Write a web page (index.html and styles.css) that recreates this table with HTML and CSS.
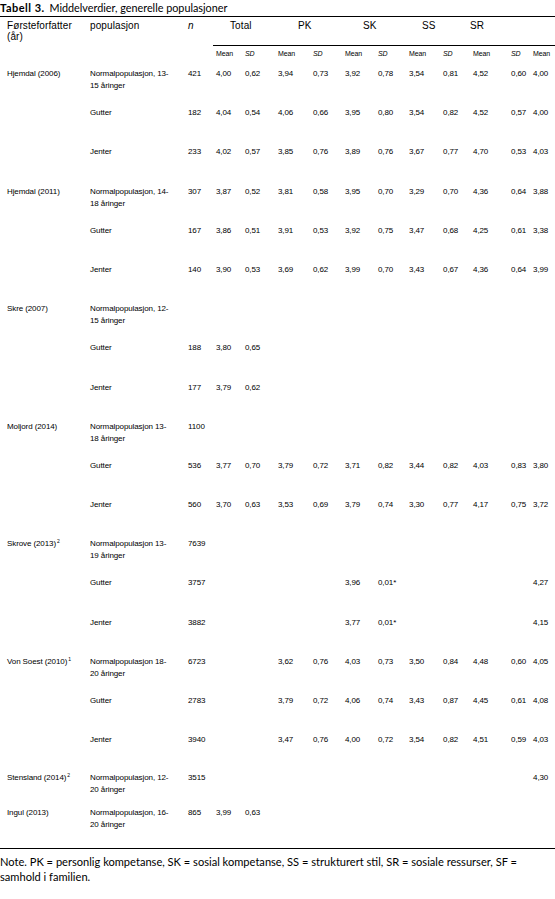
FILE: index.html
```html
<!DOCTYPE html>
<html lang="no">
<head>
<meta charset="utf-8">
<title>Tabell 3</title>
<link rel="stylesheet" href="styles.css">
</head>
<body>
<p class="title"><b>Tabell 3.</b> Middelverdier, generelle populasjoner</p>
<table class="tbl">
  <colgroup>
    <col class="c-author"><col class="c-pop"><col class="c-n">
    <col class="c-tm"><col class="c-tsd">
    <col class="c-pm"><col class="c-psd">
    <col class="c-km"><col class="c-ksd">
    <col class="c-sm"><col class="c-ssd">
    <col class="c-rm"><col class="c-rsd">
    <col class="c-fm">
  </colgroup>
  <thead>
    <tr class="head">
      <th class="first">Førsteforfatter<br>(år)</th>
      <th>populasjon</th>
      <th><i>n</i></th>
      <th colspan="2" class="grp g-total">Total</th>
      <th colspan="2" class="grp g-pk">PK</th>
      <th colspan="2" class="grp g-sk">SK</th>
      <th colspan="2" class="grp g-ss">SS</th>
      <th colspan="2" class="grp g-sr">SR</th>
      <th class="grp"></th>
    </tr>
    <tr class="sub">
      <th class="first"></th><th></th><th></th>
      <th>Mean</th><th><i>SD</i></th>
      <th>Mean</th><th><i>SD</i></th>
      <th>Mean</th><th><i>SD</i></th>
      <th>Mean</th><th><i>SD</i></th>
      <th>Mean</th><th><i>SD</i></th>
      <th>Mean</th>
    </tr>
  </thead>
  <tbody>
    <tr class="r"><td class="first">Hjemdal (2006)</td><td>Normalpopulasjon, 13-<br>15 åringer</td><td>421</td><td>4,00</td><td>0,62</td><td>3,94</td><td>0,73</td><td>3,92</td><td>0,78</td><td>3,54</td><td>0,81</td><td>4,52</td><td>0,60</td><td>4,00</td></tr>
    <tr class="r"><td class="first"></td><td>Gutter</td><td>182</td><td>4,04</td><td>0,54</td><td>4,06</td><td>0,66</td><td>3,95</td><td>0,80</td><td>3,54</td><td>0,82</td><td>4,52</td><td>0,57</td><td>4,00</td></tr>
    <tr class="r"><td class="first"></td><td>Jenter</td><td>233</td><td>4,02</td><td>0,57</td><td>3,85</td><td>0,76</td><td>3,89</td><td>0,76</td><td>3,67</td><td>0,77</td><td>4,70</td><td>0,53</td><td>4,03</td></tr>
    <tr class="r"><td class="first">Hjemdal (2011)</td><td>Normalpopulasjon, 14-<br>18 åringer</td><td>307</td><td>3,87</td><td>0,52</td><td>3,81</td><td>0,58</td><td>3,95</td><td>0,70</td><td>3,29</td><td>0,70</td><td>4,36</td><td>0,64</td><td>3,88</td></tr>
    <tr class="r"><td class="first"></td><td>Gutter</td><td>167</td><td>3,86</td><td>0,51</td><td>3,91</td><td>0,53</td><td>3,92</td><td>0,75</td><td>3,47</td><td>0,68</td><td>4,25</td><td>0,61</td><td>3,38</td></tr>
    <tr class="r"><td class="first"></td><td>Jenter</td><td>140</td><td>3,90</td><td>0,53</td><td>3,69</td><td>0,62</td><td>3,99</td><td>0,70</td><td>3,43</td><td>0,67</td><td>4,36</td><td>0,64</td><td>3,99</td></tr>
    <tr class="r"><td class="first">Skre (2007)</td><td>Normalpopulasjon, 12-<br>15 åringer</td><td></td><td></td><td></td><td></td><td></td><td></td><td></td><td></td><td></td><td></td><td></td><td></td></tr>
    <tr class="r"><td class="first"></td><td>Gutter</td><td>188</td><td>3,80</td><td>0,65</td><td></td><td></td><td></td><td></td><td></td><td></td><td></td><td></td><td></td></tr>
    <tr class="r"><td class="first"></td><td>Jenter</td><td>177</td><td>3,79</td><td>0,62</td><td></td><td></td><td></td><td></td><td></td><td></td><td></td><td></td><td></td></tr>
    <tr class="r"><td class="first">Moljord (2014)</td><td>Normalpopulasjon 13-<br>18 åringer</td><td>1100</td><td></td><td></td><td></td><td></td><td></td><td></td><td></td><td></td><td></td><td></td><td></td></tr>
    <tr class="r"><td class="first"></td><td>Gutter</td><td>536</td><td>3,77</td><td>0,70</td><td>3,79</td><td>0,72</td><td>3,71</td><td>0,82</td><td>3,44</td><td>0,82</td><td>4,03</td><td>0,83</td><td>3,80</td></tr>
    <tr class="r"><td class="first"></td><td>Jenter</td><td>560</td><td>3,70</td><td>0,63</td><td>3,53</td><td>0,69</td><td>3,79</td><td>0,74</td><td>3,30</td><td>0,77</td><td>4,17</td><td>0,75</td><td>3,72</td></tr>
    <tr class="r"><td class="first">Skrove (2013)<sup>2</sup></td><td>Normalpopulasjon 13-<br>19 åringer</td><td>7639</td><td></td><td></td><td></td><td></td><td></td><td></td><td></td><td></td><td></td><td></td><td></td></tr>
    <tr class="r"><td class="first"></td><td>Gutter</td><td>3757</td><td></td><td></td><td></td><td></td><td>3,96</td><td>0,01*</td><td></td><td></td><td></td><td></td><td>4,27</td></tr>
    <tr class="r"><td class="first"></td><td>Jenter</td><td>3882</td><td></td><td></td><td></td><td></td><td>3,77</td><td>0,01*</td><td></td><td></td><td></td><td></td><td>4,15</td></tr>
    <tr class="r"><td class="first">Von Soest (2010)<sup>1</sup></td><td>Normalpopulasjon 18-<br>20 åringer</td><td>6723</td><td></td><td></td><td>3,62</td><td>0,76</td><td>4,03</td><td>0,73</td><td>3,50</td><td>0,84</td><td>4,48</td><td>0,60</td><td>4,05</td></tr>
    <tr class="r"><td class="first"></td><td>Gutter</td><td>2783</td><td></td><td></td><td>3,79</td><td>0,72</td><td>4,06</td><td>0,74</td><td>3,43</td><td>0,87</td><td>4,45</td><td>0,61</td><td>4,08</td></tr>
    <tr class="r r-short"><td class="first"></td><td>Jenter</td><td>3940</td><td></td><td></td><td>3,47</td><td>0,76</td><td>4,00</td><td>0,72</td><td>3,54</td><td>0,82</td><td>4,51</td><td>0,59</td><td>4,03</td></tr>
    <tr class="r r-tight"><td class="first">Stensland (2014)<sup>2</sup></td><td>Normalpopulasjon, 12-<br>20 åringer</td><td>3515</td><td></td><td></td><td></td><td></td><td></td><td></td><td></td><td></td><td></td><td></td><td>4,30</td></tr>
    <tr class="r r-last"><td class="first">Ingul (2013)</td><td>Normalpopulasjon, 16-<br>20 åringer</td><td>865</td><td>3,99</td><td>0,63</td><td></td><td></td><td></td><td></td><td></td><td></td><td></td><td></td><td></td></tr>
  </tbody>
</table>
<p class="note">Note. PK = personlig kompetanse, SK = sosial kompetanse, SS = strukturert stil, SR = sosiale ressurser, SF =<br>samhold i familien.</p>
</body>
</html>
```

FILE: styles.css
```css
html, body {
  margin: 0;
  padding: 0;
  background: #ffffff;
  overflow: hidden;
}

body {
  width: 555px;
  color: #000000;
}

.title {
  margin: 0;
  height: 16px;
  font-family: Lato, "Open Sans", sans-serif;
  font-size: 10.8px;
  line-height: 16px;
  white-space: nowrap;
}

.title b {
  font-weight: 700;
  font-size: 11px;
  letter-spacing: 0.5px;
  margin-right: 2px;
}

.tbl {
  width: 555px;
  table-layout: fixed;
  border-collapse: separate;
  border-spacing: 0;
  border-top: 1px solid #000;
  border-bottom: 1px solid #000;
  font-family: "Liberation Sans", Arial, sans-serif;
  color: #000;
}

.c-author { width: 87px; }
.c-pop { width: 98px; }
.c-n { width: 28px; }
.c-tm { width: 29px; }
.c-tsd { width: 33px; }
.c-pm { width: 35px; }
.c-psd { width: 32px; }
.c-km { width: 33px; }
.c-ksd { width: 31px; }
.c-sm { width: 34px; }
.c-ssd { width: 30px; }
.c-rm { width: 38px; }
.c-rsd { width: 22px; }
.c-fm { width: 25px; }

.tbl th,
.tbl td {
  padding: 0 0 0 3px;
  vertical-align: top;
  text-align: left;
  font-weight: normal;
  white-space: nowrap;
  overflow: hidden;
}

.tbl .first {
  padding-left: 7px;
}

.head {
  height: 29px;
}

.head th {
  font-size: 10px;
  line-height: 11px;
  padding-top: 3px;
  letter-spacing: 0.1px;
}

.head .grp {
  border-bottom: 1px solid #000;
}

.head .g-total { padding-left: 17px; }
.head .g-pk { padding-left: 23px; }
.head .g-sk { padding-left: 21px; }
.head .g-ss { padding-left: 16px; }
.head .g-sr { padding-left: 0; }

.sub {
  height: 14px;
}

.sub th {
  font-size: 7px;
  line-height: 10px;
  padding-top: 3px;
  letter-spacing: -0.1px;
}

.r {
  height: 39.2px;
}

.r td {
  font-size: 8px;
  line-height: 12px;
  padding-top: 8px;
  letter-spacing: -0.1px;
}

.r-short { height: 38px; }
.r-tight { height: 35px; }
.r-last { height: 48.6px; }

.r sup {
  font-size: 5px;
  line-height: 0;
  vertical-align: 3px;
  margin-left: 1px;
}

.note {
  margin: 0;
  padding-top: 5px;
  font-family: Lato, "Open Sans", sans-serif;
  font-size: 11.1px;
  line-height: 15px;
  white-space: nowrap;
}
```
